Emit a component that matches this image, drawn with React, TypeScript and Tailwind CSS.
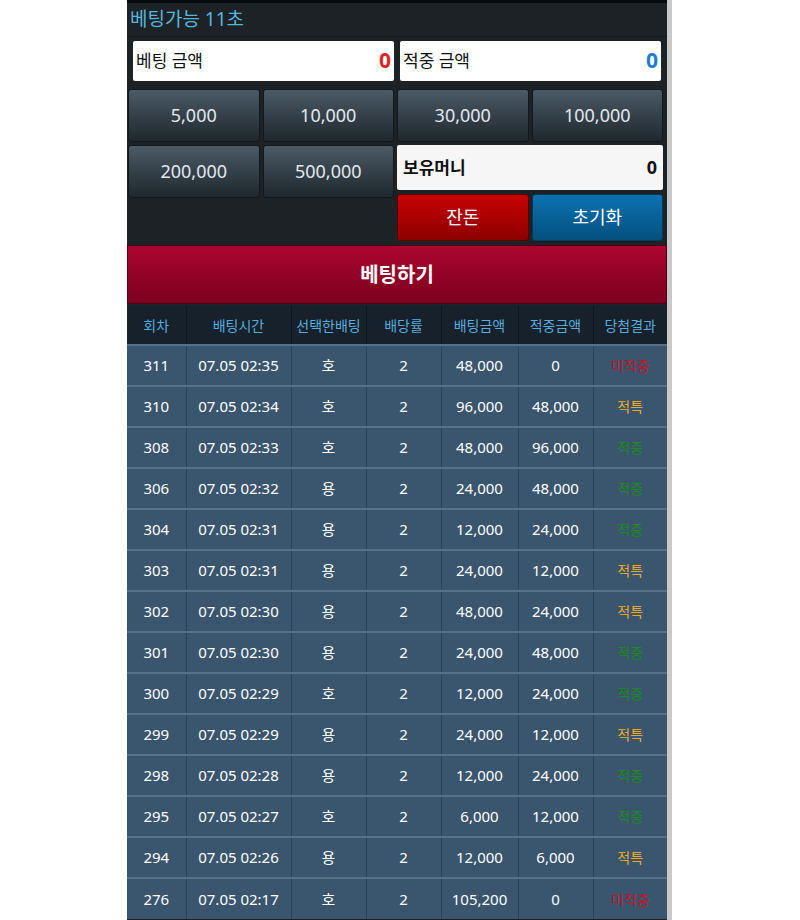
import React from 'react';

type Row = {
  no: string;
  time: string;
  pick: string;
  odds: string;
  bet: string;
  win: string;
  result: '미적중' | '적특' | '적중';
};

const rows: Row[] = [
  { no: '311', time: '07.05 02:35', pick: '호', odds: '2', bet: '48,000', win: '0', result: '미적중' },
  { no: '310', time: '07.05 02:34', pick: '호', odds: '2', bet: '96,000', win: '48,000', result: '적특' },
  { no: '308', time: '07.05 02:33', pick: '호', odds: '2', bet: '48,000', win: '96,000', result: '적중' },
  { no: '306', time: '07.05 02:32', pick: '용', odds: '2', bet: '24,000', win: '48,000', result: '적중' },
  { no: '304', time: '07.05 02:31', pick: '용', odds: '2', bet: '12,000', win: '24,000', result: '적중' },
  { no: '303', time: '07.05 02:31', pick: '용', odds: '2', bet: '24,000', win: '12,000', result: '적특' },
  { no: '302', time: '07.05 02:30', pick: '용', odds: '2', bet: '48,000', win: '24,000', result: '적특' },
  { no: '301', time: '07.05 02:30', pick: '용', odds: '2', bet: '24,000', win: '48,000', result: '적중' },
  { no: '300', time: '07.05 02:29', pick: '호', odds: '2', bet: '12,000', win: '24,000', result: '적중' },
  { no: '299', time: '07.05 02:29', pick: '용', odds: '2', bet: '24,000', win: '12,000', result: '적특' },
  { no: '298', time: '07.05 02:28', pick: '용', odds: '2', bet: '12,000', win: '24,000', result: '적중' },
  { no: '295', time: '07.05 02:27', pick: '호', odds: '2', bet: '6,000', win: '12,000', result: '적중' },
  { no: '294', time: '07.05 02:26', pick: '용', odds: '2', bet: '12,000', win: '6,000', result: '적특' },
  { no: '276', time: '07.05 02:17', pick: '호', odds: '2', bet: '105,200', win: '0', result: '미적중' },
];

const resultColor = {
  미적중: 'text-[#c8141e]',
  적특: 'text-[#f0a828]',
  적중: 'text-[#1c8a1c]',
};

// column widths, in px
const cols = ['w-[59px]', 'w-[105px]', 'w-[75px]', 'w-[75px]', 'w-[77px]', 'w-[75px]', 'w-[74px]'];
const heads = ['회차', '배팅시간', '선택한배팅', '배당률', '배팅금액', '적중금액', '당첨결과'];

const ChipButton = ({ label }: { label: string }) => (
  <button className="h-[53px] rounded-[3px] border border-[#12181c] bg-gradient-to-b from-[#4b5b67] to-[#1f282e] text-[18px] text-[#e2e8ec]">
    {label}
  </button>
);

export default function App() {
  return (
    <div className="flex min-h-[920px] bg-white font-['Noto_Sans','Noto_Sans_CJK_KR',sans-serif]">
      <div className="w-[127px] shrink-0" />
      <div className="w-[540px] shrink-0 bg-[#1c2226]">
        <div className="h-[3px] bg-[#070a0c]" />
        <div className="flex h-[34px] items-center border-b border-[#11171a] px-[3px] text-[19px] text-[#56b4dd]">
          베팅가능 11초
        </div>

        <div className="flex gap-[6px] px-[6px] pt-[4px]">
          <div className="flex h-[40px] flex-1 items-center justify-between rounded-[2px] bg-white px-[3px]">
            <span className="text-[17px] text-[#111]">베팅 금액</span>
            <span className="text-[21px] font-bold text-[#e02424]">0</span>
          </div>
          <div className="flex h-[40px] flex-1 items-center justify-between rounded-[2px] bg-white px-[3px]">
            <span className="text-[17px] text-[#111]">적중 금액</span>
            <span className="text-[21px] font-bold text-[#1f7bd6]">0</span>
          </div>
        </div>

        <div className="mt-[8px] grid grid-cols-4 gap-[3px] pl-[1px] pr-[4px]">
          <ChipButton label="5,000" />
          <ChipButton label="10,000" />
          <ChipButton label="30,000" />
          <ChipButton label="100,000" />
          <ChipButton label="200,000" />
          <ChipButton label="500,000" />
          <div className="col-span-2 flex flex-col gap-[4px]">
            <div className="flex h-[45px] items-center justify-between rounded-[2px] bg-[#f6f6f6] px-[6px]">
              <span className="text-[17px] font-bold text-[#111]">보유머니</span>
              <span className="text-[18px] font-bold text-[#111]">0</span>
            </div>
            <div className="grid grid-cols-2 gap-[3px]">
              <button className="h-[47px] rounded-[3px] border border-[#5a0000] bg-gradient-to-b from-[#c80202] to-[#8e0000] text-[18px] text-white">
                잔돈
              </button>
              <button className="h-[47px] rounded-[3px] border border-[#033a5c] bg-gradient-to-b from-[#0b72b2] to-[#05507f] text-[18px] text-white">
                초기화
              </button>
            </div>
          </div>
        </div>

        <button className="mt-[4px] flex h-[59px] w-full items-center justify-center rounded-[2px] border border-[#4a0012] bg-gradient-to-b from-[#ac0630] to-[#7c001e] text-[20px] font-bold text-white">
          베팅하기
        </button>

        <table className="mt-[2px] w-full border-collapse text-center">
          <thead>
            <tr className="h-[39px] bg-[#17212b]">
              {heads.map((h, i) => (
                <th
                  key={h}
                  className={`${cols[i]} border-r border-[#0e151b] text-[14px] font-normal text-[#58acdf] last:border-r-0`}
                >
                  {h}
                </th>
              ))}
            </tr>
          </thead>
          <tbody>
            {rows.map((r) => (
              <tr key={r.no} className="h-[41px] border-t-2 border-[#55718a] bg-[#3a556e] text-[15px] text-white">
                <td className="border-r border-[#2a3f53]">{r.no}</td>
                <td className="border-r border-[#2a3f53]">{r.time}</td>
                <td className="border-r border-[#2a3f53]">{r.pick}</td>
                <td className="border-r border-[#2a3f53]">{r.odds}</td>
                <td className="border-r border-[#2a3f53]">{r.bet}</td>
                <td className="border-r border-[#2a3f53]">{r.win}</td>
                <td className={`text-[14px] ${resultColor[r.result]}`}>{r.result}</td>
              </tr>
            ))}
          </tbody>
        </table>
      </div>
      <div className="w-[5px] shrink-0 bg-[#c9c9c9]" />
    </div>
  );
}
